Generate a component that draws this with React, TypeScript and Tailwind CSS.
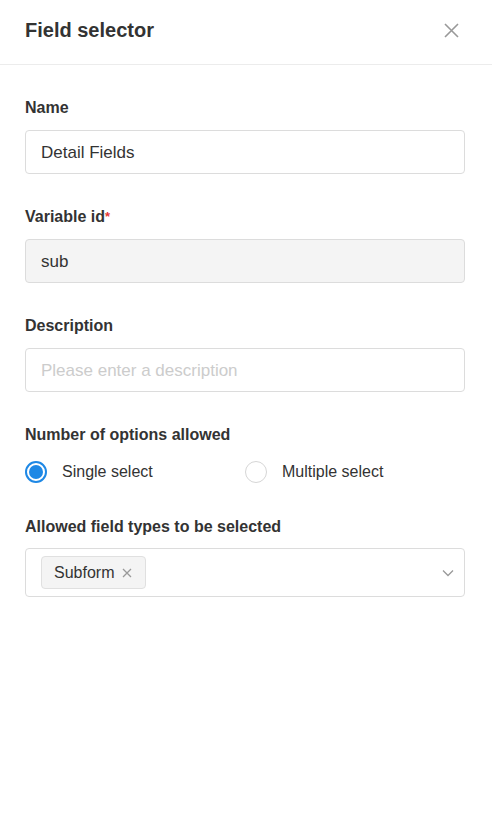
import { useState } from 'react';

const font = { fontFamily: '"Liberation Sans", Arial, sans-serif' };

function Label({ text, required }: { text: string; required?: boolean }) {
  return (
    <div className="mb-[10px] text-[16px] font-bold leading-[24px] text-[#333]">
      {text}
      {required && <span className="text-[#e53935] text-[13px] align-top">*</span>}
    </div>
  );
}

function Radio({ checked, label, onClick }: { checked: boolean; label: string; onClick: () => void }) {
  return (
    <button type="button" onClick={onClick} className="flex items-center h-[30px] w-[220px] text-left">
      <span
        className={`w-[22px] h-[22px] rounded-full flex items-center justify-center ${
          checked ? 'border-2 border-[#1e88e5]' : 'border border-[#d6d6d6]'
        }`}
      >
        {checked && <span className="w-[14px] h-[14px] rounded-full bg-[#1e88e5]" />}
      </span>
      <span className="ml-[15px] text-[16px] text-[#333]">{label}</span>
    </button>
  );
}

export default function App() {
  const [mode, setMode] = useState<'single' | 'multiple'>('single');
  const [name, setName] = useState('Detail Fields');
  const [desc, setDesc] = useState('');

  return (
    <div className="w-[492px] h-[821px] bg-white" style={font}>
      {/* Header */}
      <div className="h-[65px] border-b border-[#ececec] flex items-center justify-between pl-[25px] pr-[33px] pb-[4px]">
        <h2 className="text-[20px] font-bold text-[#333]">Field selector</h2>
        <button type="button" className="text-[#999]">
          <svg width="15" height="15" viewBox="0 0 15 15" fill="none" stroke="currentColor" strokeWidth="1.6">
            <path d="M1 1l13 13M14 1L1 14" />
          </svg>
        </button>
      </div>

      {/* Form */}
      <div className="pl-[25px] pt-[31px] flex flex-col">
        <div className="mb-[31px]">
          <Label text="Name" />
          <input
            value={name}
            onChange={(e) => setName(e.target.value)}
            className="w-[440px] h-[44px] border border-[#dcdcdc] rounded-[4px] px-[15px] pt-[2px] text-[17px] text-[#333] outline-none"
          />
        </div>

        <div className="mb-[31px]">
          <Label text="Variable id" required />
          <div className="w-[440px] h-[44px] border border-[#dcdcdc] rounded-[4px] bg-[#f4f4f4] px-[15px] pt-[2px] flex items-center text-[17px] text-[#333]">
            sub
          </div>
        </div>

        <div className="mb-[31px]">
          <Label text="Description" />
          <input
            value={desc}
            onChange={(e) => setDesc(e.target.value)}
            placeholder="Please enter a description"
            className="w-[440px] h-[44px] border border-[#dcdcdc] rounded-[4px] px-[15px] pt-[2px] text-[17px] text-[#333] placeholder-[#cccccc] outline-none"
          />
        </div>

        <div className="mb-[28px]">
          <Label text="Number of options allowed" />
          <div className="flex">
            <Radio checked={mode === 'single'} label="Single select" onClick={() => setMode('single')} />
            <Radio checked={mode === 'multiple'} label="Multiple select" onClick={() => setMode('multiple')} />
          </div>
        </div>

        <div>
          <div className="mb-[9px] text-[16px] font-bold leading-[24px] text-[#333]">Allowed field types to be selected</div>
          <div className="w-[440px] h-[49px] border border-[#dcdcdc] rounded-[4px] pl-[15px] pr-[10px] flex items-center justify-between">
            <span className="h-[33px] flex items-center rounded-[4px] border border-[#e0e0e0] bg-[#f4f4f4] pl-[12px] pr-[13px] text-[16px] text-[#333]">
              Subform
              <svg className="ml-[8px] text-[#999]" width="10" height="10" viewBox="0 0 10 10" fill="none" stroke="currentColor" strokeWidth="1.3">
                <path d="M1 1l8 8M9 1L1 9" />
              </svg>
            </span>
            <svg className="text-[#999]" width="12" height="8" viewBox="0 0 12 8" fill="none" stroke="currentColor" strokeWidth="1.3">
              <path d="M1 1.5l5 5 5-5" />
            </svg>
          </div>
        </div>
      </div>
    </div>
  );
}
